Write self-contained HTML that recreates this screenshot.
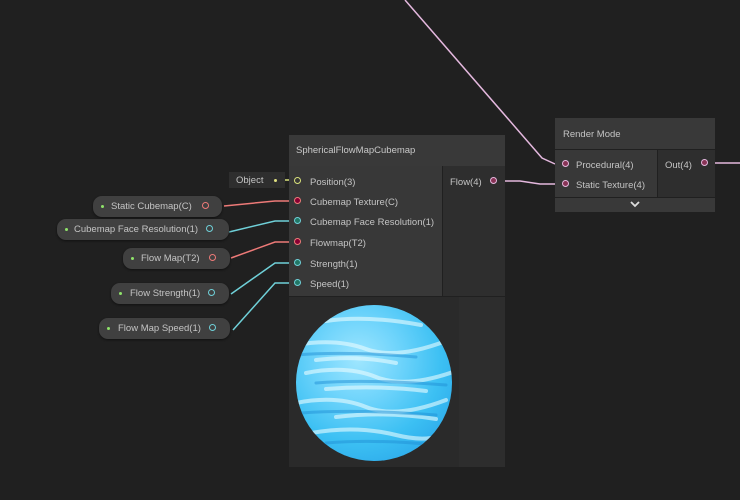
<!DOCTYPE html>
<html><head><style>
body{margin:0;width:740px;height:500px;background:#202020;overflow:hidden;position:relative;font-family:"Liberation Sans",sans-serif;font-size:9.5px;color:#c4c4c4}
.a{position:absolute}
.pill{position:absolute;background:#404040;border-radius:9px;height:21px;line-height:21px;box-shadow:0 1px 2px #111}
.pill .d{position:absolute;left:8px;top:9px;width:3px;height:3px;border-radius:50%;background:#8fe36a}
.port{position:absolute;width:5px;height:5px;border-radius:50%;border:1.5px solid}
.lbl{position:absolute;white-space:nowrap}
</style></head><body>
<svg class="a" style="left:0;top:0" width="740" height="500">
<g fill="none" stroke-width="1.5">
<path d="M405 0 L542 158 L555 164" stroke="#e4b8de"/>
<path d="M500 181 L520 181 L540 184 L555 184" stroke="#e4b8de"/>
<path d="M705 163 L740 163" stroke="#e4b8de"/>
<path d="M276 180 L298 180" stroke="#d9e27a"/>
<path d="M224 206 L275 201 L298 201" stroke="#ee7a78"/>
<path d="M229 232 L275 221 L298 221" stroke="#6fd0d8"/>
<path d="M231 258 L275 242 L298 242" stroke="#ee7a78"/>
<path d="M231 294 L275 263 L298 263" stroke="#6fd0d8"/>
<path d="M233 330 L275 283 L298 283" stroke="#6fd0d8"/>
</g></svg>

<div class="a" style="left:289px;top:135px;width:216px;height:31px;background:#393939"></div>
<div class="lbl" style="left:296px;top:145px;color:#c8c8c8">SphericalFlowMapCubemap</div>
<div class="a" style="left:289px;top:166px;width:153px;height:130px;background:#383838"></div>
<div class="a" style="left:443px;top:166px;width:62px;height:130px;background:#2e2e2e"></div>
<div class="a" style="left:289px;top:297px;width:216px;height:170px;background:#2d2d2d"></div>
<div class="a" style="left:289px;top:297px;width:170px;height:170px;background:#2a2a2a"></div>
<div class="a" style="left:296px;top:305px;width:156px;height:156px;border-radius:50%;background:radial-gradient(circle at 40% 35%,#9fe6ff 0%,#6fd4fb 30%,#3cc0f3 60%,#2ba8ea 85%,#2596dc 100%)"></div>
<svg class="a" style="left:296px;top:305px" width="156" height="156"><defs><clipPath id="c"><circle cx="78" cy="78" r="78"/></clipPath></defs><g clip-path="url(#c)" fill="none" stroke-linecap="round"><g stroke="#e8fbff" stroke-opacity=".6" stroke-width="4"><path d="M0 40 Q40 33 70 44 T150 36"/><path d="M10 68 Q50 60 80 72 T160 66"/><path d="M0 98 Q40 90 70 102 T150 95"/><path d="M15 128 Q60 120 100 130 T160 122"/><path d="M30 16 Q70 10 125 20"/><path d="M20 55 Q60 50 100 58"/><path d="M40 112 Q90 106 140 114"/><path d="M30 84 Q80 80 130 86"/></g><g stroke="#1f8fd6" stroke-opacity=".5" stroke-width="3"><path d="M0 50 Q50 46 120 52"/><path d="M20 78 Q70 74 150 80"/><path d="M5 108 Q60 104 140 110"/><path d="M30 138 Q80 134 140 140"/></g></g></svg>

<div class="a" style="left:229px;top:172px;width:56px;height:16px;background:#2e2e2e"></div>
<div class="lbl" style="left:236px;top:175px">Object</div>
<div class="a" style="left:274px;top:179px;width:3px;height:3px;border-radius:50%;background:#e0e080"></div>
<div class="port" style="left:294px;top:177px;border-color:#d9e27a"></div>

<div class="port" style="left:294px;top:197px;border-color:#ee7a78;background:#803"></div>
<div class="port" style="left:294px;top:217px;border-color:#6fd0d8;background:#276"></div>
<div class="port" style="left:294px;top:238px;border-color:#ee7a78;background:#803"></div>
<div class="port" style="left:294px;top:259px;border-color:#6fd0d8;background:#276"></div>
<div class="port" style="left:294px;top:279px;border-color:#6fd0d8;background:#276"></div>
<div class="lbl" style="left:310px;top:177px">Position(3)</div>
<div class="lbl" style="left:310px;top:197px">Cubemap Texture(C)</div>
<div class="lbl" style="left:310px;top:217px">Cubemap Face Resolution(1)</div>
<div class="lbl" style="left:310px;top:238px">Flowmap(T2)</div>
<div class="lbl" style="left:310px;top:259px">Strength(1)</div>
<div class="lbl" style="left:310px;top:279px">Speed(1)</div>
<div class="lbl" style="left:450px;top:177px">Flow(4)</div>
<div class="port" style="left:490px;top:177px;border-color:#e4b8de;background:#835"></div>

<div class="pill" style="left:93px;top:196px;width:129px"><span class="d"></span><span class="lbl" style="left:18px">Static Cubemap(C)</span><span class="port" style="left:109px;top:6px;border-color:#ee7a78"></span></div>
<div class="pill" style="left:57px;top:219px;width:172px"><span class="d"></span><span class="lbl" style="left:17px">Cubemap Face Resolution(1)</span><span class="port" style="left:149px;top:6px;border-color:#6fd0d8"></span></div>
<div class="pill" style="left:123px;top:248px;width:107px"><span class="d"></span><span class="lbl" style="left:18px">Flow Map(T2)</span><span class="port" style="left:86px;top:6px;border-color:#ee7a78"></span></div>
<div class="pill" style="left:111px;top:283px;width:118px"><span class="d"></span><span class="lbl" style="left:19px">Flow Strength(1)</span><span class="port" style="left:97px;top:6px;border-color:#6fd0d8"></span></div>
<div class="pill" style="left:99px;top:318px;width:131px"><span class="d"></span><span class="lbl" style="left:19px">Flow Map Speed(1)</span><span class="port" style="left:110px;top:6px;border-color:#6fd0d8"></span></div>

<div class="a" style="left:555px;top:118px;width:160px;height:31px;background:#393939"></div>
<div class="lbl" style="left:563px;top:129px">Render Mode</div>
<div class="a" style="left:555px;top:150px;width:102px;height:47px;background:#383838"></div>
<div class="a" style="left:658px;top:150px;width:57px;height:47px;background:#2e2e2e"></div>
<div class="a" style="left:555px;top:198px;width:160px;height:14px;background:#393939"></div>
<svg class="a" style="left:629px;top:200px" width="12" height="9"><path d="M2 2 L6 6 L10 2" stroke="#ddd" stroke-width="1.8" fill="none"/></svg>
<div class="port" style="left:562px;top:160px;border-color:#e4b8de;background:#835"></div>
<div class="port" style="left:562px;top:180px;border-color:#e4b8de;background:#835"></div>
<div class="lbl" style="left:576px;top:160px">Procedural(4)</div>
<div class="lbl" style="left:576px;top:180px">Static Texture(4)</div>
<div class="lbl" style="left:665px;top:160px">Out(4)</div>
<div class="port" style="left:701px;top:159px;border-color:#e4b8de;background:#835"></div>
</body></html>
